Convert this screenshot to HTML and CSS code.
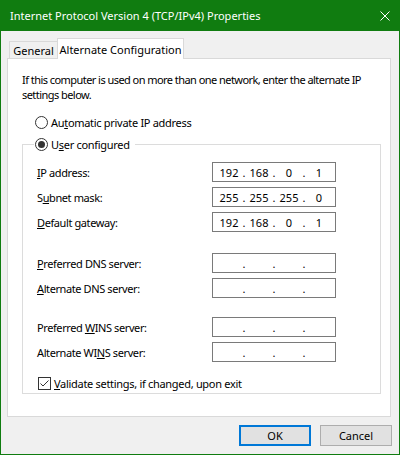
FILE: index.html
```html
<!DOCTYPE html>
<html>
<head>
    <title>Internet Protocol Version 4 (TCP/IPv4) Properties</title>
    <link rel="stylesheet" href="styles.css">
</head>
<body>
    <div class="window">
        <div class="titlebar">
            <span class="title">Internet Protocol Version 4 (TCP/IPv4) Properties</span>
            <svg class="close" width="10" height="10" viewBox="0 0 10 10">
                <path d="M0.5 0.5L9.5 9.5M9.5 0.5L0.5 9.5" stroke="#fff" stroke-width="1" fill="none"/>
            </svg>
        </div>
        <div class="content">
            <div class="tabs">
                <div class="tab">General</div>
                <div class="tab active">Alternate Configuration</div>
            </div>
            <div class="panel">
                <p class="intro">If this computer is used on more than one network, enter the alternate IP<br>settings below.</p>
                <div class="option"><span class="radio"></span><span>Au<u>t</u>omatic private IP address</span></div>
                <fieldset class="group">
                    <legend class="option"><span class="radio checked"></span><span>U<u>s</u>er configured</span></legend>
                    <div class="fields">
                        <div class="row"><span class="label"><u>I</u>P address:</span><div class="ip"><span>192</span><span>.</span><span>168</span><span>.</span><span>0</span><span>.</span><span>1</span></div></div>
                        <div class="row"><span class="label">S<u>u</u>bnet mask:</span><div class="ip"><span>255</span><span>.</span><span>255</span><span>.</span><span>255</span><span>.</span><span>0</span></div></div>
                        <div class="row"><span class="label"><u>D</u>efault gateway:</span><div class="ip"><span>192</span><span>.</span><span>168</span><span>.</span><span>0</span><span>.</span><span>1</span></div></div>
                    </div>
                    <div class="fields dns">
                        <div class="row"><span class="label"><u>P</u>referred DNS server:</span><div class="ip"><span></span><span>.</span><span></span><span>.</span><span></span><span>.</span><span></span></div></div>
                        <div class="row"><span class="label"><u>A</u>lternate DNS server:</span><div class="ip"><span></span><span>.</span><span></span><span>.</span><span></span><span>.</span><span></span></div></div>
                    </div>
                    <div class="fields wins">
                        <div class="row"><span class="label">Preferred <u>W</u>INS server:</span><div class="ip"><span></span><span>.</span><span></span><span>.</span><span></span><span>.</span><span></span></div></div>
                        <div class="row"><span class="label">Alternate WI<u>N</u>S server:</span><div class="ip"><span></span><span>.</span><span></span><span>.</span><span></span><span>.</span><span></span></div></div>
                    </div>
                    <div class="option validate">
                        <span class="checkbox">
                            <svg width="11" height="11" viewBox="0 0 11 11"><polyline points="1.5,5.5 4,8 9.5,2.5" stroke="#333" stroke-width="1" fill="none"/></svg>
                        </span>
                        <span><u>V</u>alidate settings, if changed, upon exit</span>
                    </div>
                </fieldset>
            </div>
            <div class="buttons">
                <button class="btn default">OK</button>
                <button class="btn">Cancel</button>
            </div>
        </div>
    </div>
</body>
</html>
```

FILE: styles.css
```css
body {
    margin: 0;
    font-family: "Noto Sans", sans-serif;
    font-size: 11px;
    color: #000;
}

.window {
    width: 400px;
    height: 455px;
    box-sizing: border-box;
    border: 1px solid #107c10;
    border-top: 0;
    background-color: #f0f0f0;
    display: flex;
    flex-direction: column;
}

.titlebar {
    height: 31px;
    flex-shrink: 0;
    background-color: #107c10;
    color: #fff;
    display: flex;
    align-items: center;
    justify-content: space-between;
    padding: 0 9px;
}

.content {
    flex: 1;
    display: flex;
    flex-direction: column;
    padding: 7px 8px 8px 6px;
}

.tabs {
    display: flex;
    align-items: flex-end;
    height: 21px;
    margin: 0 0 -1px 2px;
}

.tab {
    box-sizing: border-box;
    width: 48px;
    height: 17px;
    margin-bottom: 1px;
    border: 1px solid #d9d9d9;
    border-bottom: 0;
    border-right: 0;
    background-color: #f0f0f0;
    display: flex;
    align-items: center;
    justify-content: center;
    white-space: nowrap;
}

.tab.active {
    width: 127px;
    height: 21px;
    margin-bottom: 0;
    border-right: 1px solid #d9d9d9;
    background-color: #fff;
    position: relative;
    z-index: 1;
}

.panel {
    height: 359px;
    box-sizing: border-box;
    border: 1px solid #d9d9d9;
    background-color: #fff;
    padding: 13px 0 0 14px;
    letter-spacing: -0.3px;
}

.intro {
    margin: 0 0 12px;
    line-height: 15px;
    white-space: nowrap;
    letter-spacing: -0.55px;
}

.option {
    display: flex;
    align-items: center;
    gap: 3px;
    height: 16px;
    white-space: nowrap;
}

.panel > .option {
    margin-left: 13px;
}

.radio {
    width: 13px;
    height: 13px;
    box-sizing: border-box;
    border: 1px solid #333;
    border-radius: 50%;
    background-color: #fff;
    display: flex;
    align-items: center;
    justify-content: center;
}

.radio.checked::after {
    content: "";
    width: 7px;
    height: 7px;
    border-radius: 50%;
    background-color: #333;
}

.group {
    width: 359px;
    min-width: 0;
    box-sizing: border-box;
    margin: 6px 0 0;
    padding: 10px 0 2px 14px;
    border: 1px solid #dcdcdc;
}

.group legend {
    padding: 0 5px 0 1px;
    margin-left: -3px;
}

.row {
    display: flex;
    align-items: center;
    height: 20px;
}

.row + .row {
    margin-top: 5px;
}

.label {
    width: 175px;
    letter-spacing: -0.4px;
}

.fields.dns {
    margin-top: 21px;
}

.fields.wins {
    margin-top: 19px;
}

.ip {
    width: 124px;
    height: 20px;
    box-sizing: border-box;
    border: 1px solid #7a7a7a;
    background-color: #fff;
    padding: 0 3px;
    display: grid;
    grid-template-columns: 26px 4px 26px 4px 26px 4px 26px;
    align-items: center;
    text-align: center;
    letter-spacing: 0;
}

.validate {
    margin: 13px 0 0 1px;
}

.checkbox {
    width: 13px;
    height: 13px;
    box-sizing: border-box;
    border: 1px solid #333;
    background-color: #fff;
    display: flex;
}

.buttons {
    display: flex;
    justify-content: flex-end;
    gap: 9px;
    margin: 8px -1px 0 0;
}

.btn {
    width: 72px;
    height: 21px;
    box-sizing: border-box;
    padding: 0;
    border: 1px solid #adadad;
    background-color: #e1e1e1;
    font: inherit;
    color: #000;
}

.btn.default {
    border: 2px solid #0078d7;
}
```
